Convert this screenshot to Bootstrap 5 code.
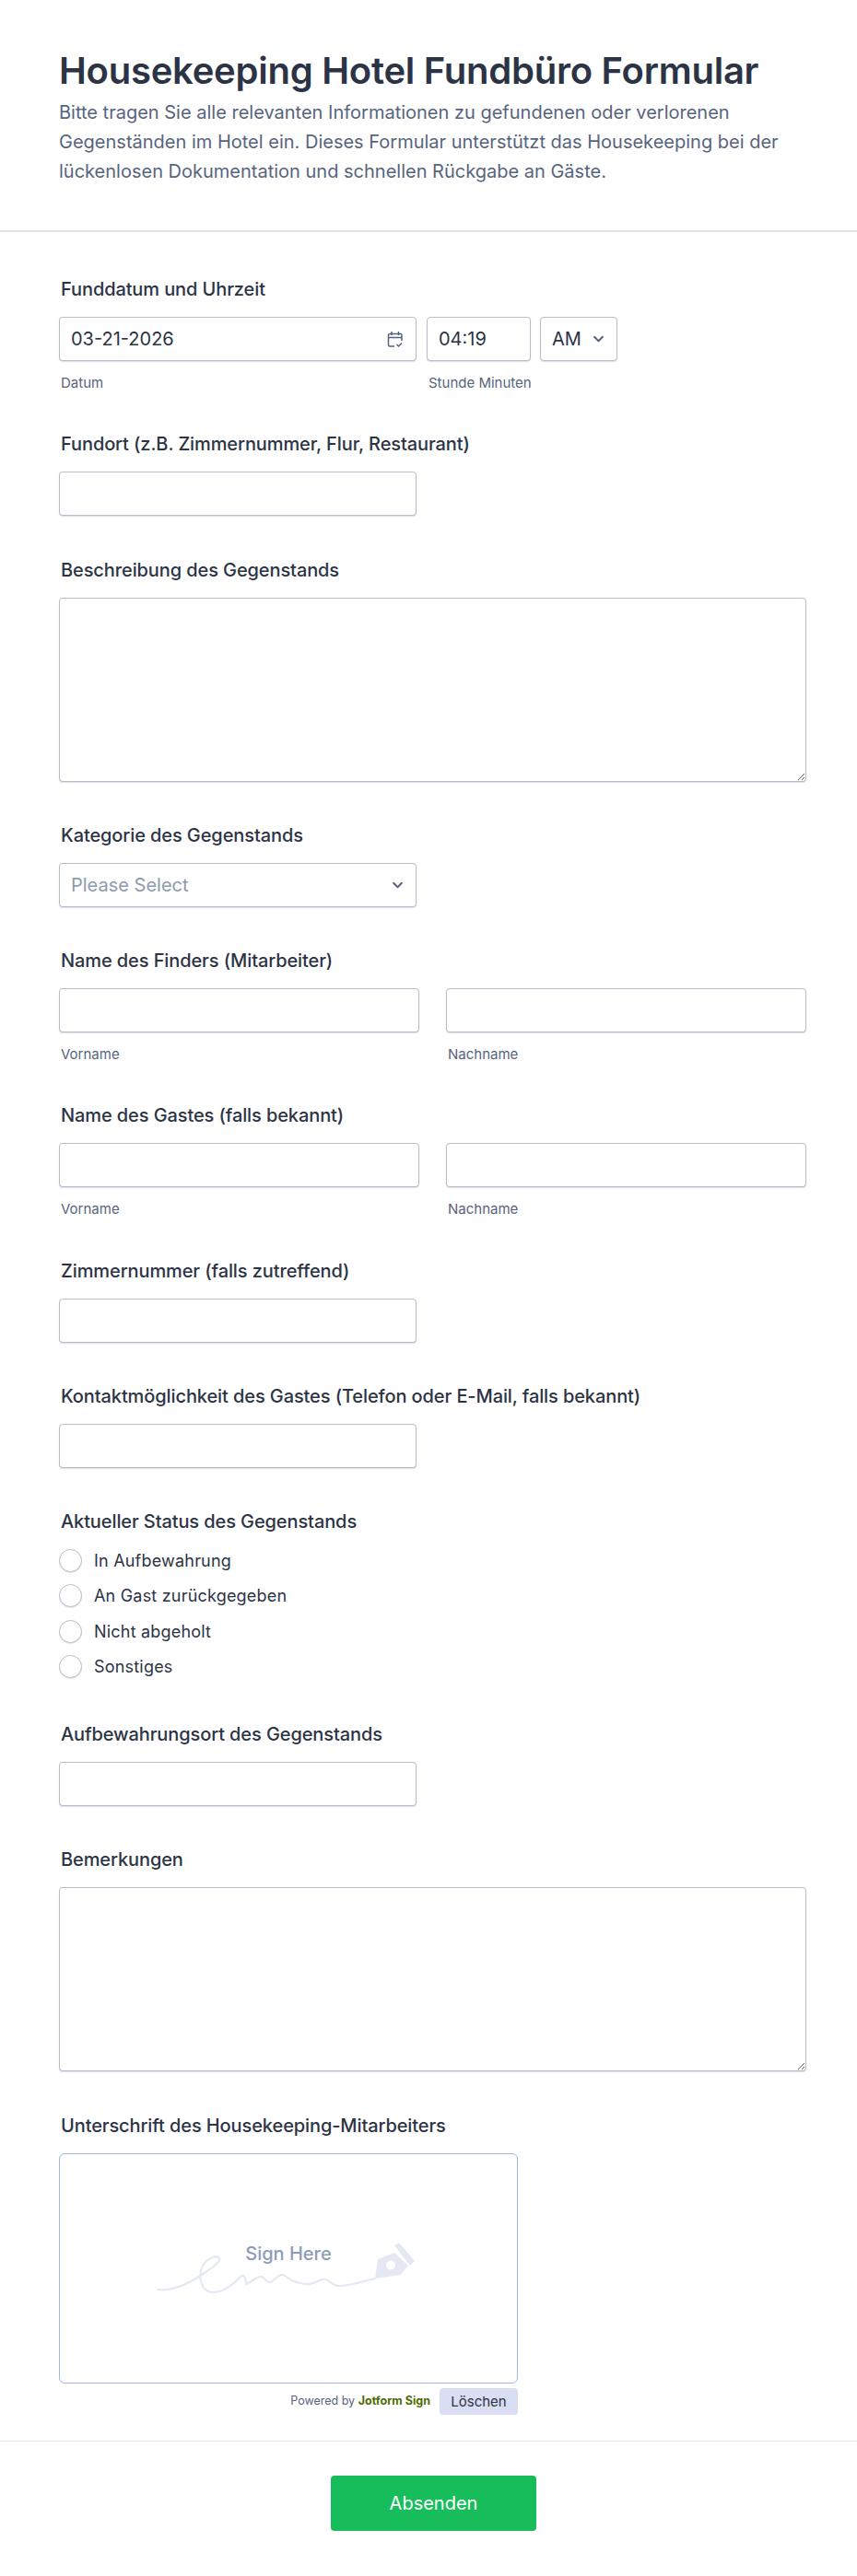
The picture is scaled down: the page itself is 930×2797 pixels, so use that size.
<!DOCTYPE html>
<html lang="de">
<head>
  <meta charset="UTF-8" />
  <meta name="viewport" content="width=device-width, initial-scale=1.0" />
  <title>Housekeeping Hotel Fundbüro Formular</title>
  <link href="https://cdn.jsdelivr.net/npm/bootstrap@5.3.0/dist/css/bootstrap.min.css" rel="stylesheet">
  <style>
    body {
      background: #fff;
      color: #2c3345;
      font-family: Inter, "Liberation Sans", sans-serif;
    }
    .form-head {
      padding: 51px 64px 0;
      height: 252px;
      border-bottom: 2px solid #dfe2ea;
    }
    .form-title {
      font-size: 40px;
      font-weight: 600;
      line-height: 52px;
      letter-spacing: -.25px;
      margin: 0 0 3px;
    }
    .form-desc {
      font-size: 20px;
      line-height: 32px;
      color: #57647e;
      margin: 0;
    }
    .form-body {
      padding: 50px 55px 0 64px;
    }
    .field-box {
      margin-bottom: 46.25px;
    }
    .field-label {
      display: block;
      font-size: 20px;
      font-weight: 500;
      line-height: 24px;
      letter-spacing: -.1px;
      margin: 0 0 18px 2px;
      color: #2c3345;
    }
    .form-control.field-input, .form-select.field-input {
      height: 48px;
      border: 1px solid #b8bdc9;
      border-radius: 4px;
      padding: 0 12px;
      font-size: 20px;
      color: #2c3345;
      box-shadow: 0 1px 1px rgba(184, 189, 201, .5);
    }
    .w-short { width: 388px; }
    .w-time { width: 113px; margin-left: 11px; }
    .w-ampm { width: 84px; margin-left: 10px; }
    .name-col { width: 391px; }
    .form-select.field-input {
      --bs-form-select-bg-img: url("data:image/svg+xml,%3csvg xmlns='http://www.w3.org/2000/svg' viewBox='0 0 14 9'%3e%3cpath fill='none' stroke='%2357647e' stroke-width='2.2' stroke-linecap='round' stroke-linejoin='round' d='M2 2l5 5 5-5'/%3e%3c/svg%3e");
      background-size: 13px 8px;
      background-position: right 13px center;
    }
    .select-empty { color: #8d9bb0 !important; }
    textarea.field-input.form-control {
      height: 200px;
    }
    .sub-label {
      font-size: 15px;
      line-height: 17px;
      color: #57647e;
      margin: 15px 0 0 2px;
      white-space: nowrap;
    }
    .date-wrap { position: relative; }
    .date-icon {
      position: absolute;
      right: 14px;
      top: 15px;
    }
    .radio-line {
      display: flex;
      align-items: center;
      height: 25px;
      margin-bottom: 13.3px;
      font-size: 18px;
      letter-spacing: .2px;
    }
    .radio-line .form-check-input {
      width: 25px;
      height: 25px;
      margin: 0 13px 0 0;
      border: 1px solid #b8bdc9;
      box-shadow: 0 1px 1px rgba(184, 189, 201, .4);
    }
    .radio-list { padding-bottom: 36px; }
    .sign-box {
      position: relative;
      width: 498px;
      height: 250px;
      border: 1px solid #9fb8dc;
      border-radius: 6px;
    }
    .sign-art {
      position: absolute;
      left: -1px;
      top: -1px;
    }
    .sign-text {
      position: absolute;
      top: 94px;
      left: 0;
      right: 0;
      text-align: center;
      font-size: 20px;
      font-weight: 500;
      line-height: 28px;
      color: #8d9bb8;
    }
    .sign-foot {
      width: 498px;
      margin-top: 5px;
      font-size: 12.5px;
      color: #57647e;
    }
    .jf-sign { color: #4c6d00; font-weight: 700; }
    .btn-clear {
      background: #dadef3;
      color: #2c3345;
      font-size: 15px;
      line-height: 29px;
      width: 85px;
      height: 29px;
      padding: 0;
      border: 0;
      border-radius: 4px;
      margin-left: 10px;
    }
    .form-foot {
      margin-top: 28px;
      border-top: 1px solid #e3e5ec;
      padding: 37px 0 49px 11px;
    }
    .btn-send {
      width: 223px;
      height: 60px;
      background: #18bd5b;
      border: 0;
      border-radius: 4px;
      color: #fff;
      font-size: 20px;
      font-weight: 400;
    }
  </style>
</head>
<body>

<div class="form-head">
  <h1 class="form-title">Housekeeping Hotel Fundbüro Formular</h1>
  <p class="form-desc">Bitte tragen Sie alle relevanten Informationen zu gefundenen oder verlorenen Gegenständen im Hotel ein. Dieses Formular unterstützt das Housekeeping bei der lückenlosen Dokumentation und schnellen Rückgabe an Gäste.</p>
</div>

<form class="form-body">

  <div class="field-box">
    <label class="field-label">Funddatum und Uhrzeit</label>
    <div class="d-flex">
      <div class="date-wrap w-short">
        <input type="text" class="form-control field-input" value="03-21-2026">
        <svg class="date-icon" width="18" height="19" viewBox="0 0 18 19" fill="none" stroke="#57647e" stroke-width="1.5">
          <path d="M16 11V5a1.5 1.5 0 0 0-1.500-1.500H3A1.500 1.500 0 0 0 1.500 5v10.500A1.500 1.500 0 0 0 3 17h5"/>
          <path d="M1.500 7.500h14.500M5 1v4M12.500 1v4"/>
          <path d="M10.500 15l2 2 3.500-3.500"/>
        </svg>
        <div class="sub-label">Datum</div>
      </div>
      <div class="w-time">
        <input type="text" class="form-control field-input" value="04:19">
        <div class="sub-label">Stunde Minuten</div>
      </div>
      <div class="w-ampm">
        <select class="form-select field-input"><option>AM</option><option>PM</option></select>
      </div>
    </div>
  </div>

  <div class="field-box">
    <label class="field-label">Fundort (z.B. Zimmernummer, Flur, Restaurant)</label>
    <input type="text" class="form-control field-input w-short">
  </div>

  <div class="field-box">
    <label class="field-label">Beschreibung des Gegenstands</label>
    <textarea class="form-control field-input"></textarea>
  </div>

  <div class="field-box">
    <label class="field-label">Kategorie des Gegenstands</label>
    <select class="form-select field-input w-short select-empty"><option>Please Select</option></select>
  </div>

  <div class="field-box">
    <label class="field-label">Name des Finders (Mitarbeiter)</label>
    <div class="d-flex justify-content-between">
      <div class="name-col">
        <input type="text" class="form-control field-input">
        <div class="sub-label">Vorname</div>
      </div>
      <div class="name-col">
        <input type="text" class="form-control field-input">
        <div class="sub-label">Nachname</div>
      </div>
    </div>
  </div>

  <div class="field-box">
    <label class="field-label">Name des Gastes (falls bekannt)</label>
    <div class="d-flex justify-content-between">
      <div class="name-col">
        <input type="text" class="form-control field-input">
        <div class="sub-label">Vorname</div>
      </div>
      <div class="name-col">
        <input type="text" class="form-control field-input">
        <div class="sub-label">Nachname</div>
      </div>
    </div>
  </div>

  <div class="field-box">
    <label class="field-label">Zimmernummer (falls zutreffend)</label>
    <input type="text" class="form-control field-input w-short">
  </div>

  <div class="field-box">
    <label class="field-label">Kontaktmöglichkeit des Gastes (Telefon oder E-Mail, falls bekannt)</label>
    <input type="text" class="form-control field-input w-short">
  </div>

  <div class="radio-list">
    <label class="field-label">Aktueller Status des Gegenstands</label>
    <div class="radio-line"><input class="form-check-input" type="radio" name="status"><span>In Aufbewahrung</span></div>
    <div class="radio-line"><input class="form-check-input" type="radio" name="status"><span>An Gast zurückgegeben</span></div>
    <div class="radio-line"><input class="form-check-input" type="radio" name="status"><span>Nicht abgeholt</span></div>
    <div class="radio-line"><input class="form-check-input" type="radio" name="status"><span>Sonstiges</span></div>
  </div>

  <div class="field-box">
    <label class="field-label">Aufbewahrungsort des Gegenstands</label>
    <input type="text" class="form-control field-input w-short">
  </div>

  <div class="field-box">
    <label class="field-label">Bemerkungen</label>
    <textarea class="form-control field-input"></textarea>
  </div>

  <div>
    <label class="field-label">Unterschrift des Housekeeping-Mitarbeiters</label>
    <div class="sign-box">
      <svg class="sign-art" width="498" height="250" viewBox="0 0 498 250" fill="none">
        <path d="M107 148C118 150 138 144 155 132C166 124 176 118 174 114C171 109 159 116 156 122C151 132 153 145 162 150C172 154 186 146 196 135C200 131 202 132 203 142C210 140 215 133 220 134C224 136 226 141 229 140C234 138 238 131 243 132C248 133 250 138 255 139C262 141 266 143 272 142C278 141 284 136 289 137C295 139 298 144 303 144C316 144 330 139 343 136" stroke="#e3e8f2" stroke-width="2.200" stroke-linecap="round"/>
        <path fill-rule="evenodd" d="M343 136L346 115L364 108L379 122L370.500 132ZM360 116.500a5 5 0 1 0 .1 0Z" fill="#e3e8f2"/>
        <path d="M364 100L369 97L386 117L381 122Z" fill="#e3e8f2"/>
      </svg>
      <div class="sign-text">Sign Here</div>
    </div>
    <div class="sign-foot d-flex justify-content-end align-items-center">
      <span>Powered by <span class="jf-sign">Jotform Sign</span></span>
      <button type="button" class="btn-clear">Löschen</button>
    </div>
  </div>

</form>

<div class="form-foot text-center">
  <button type="button" class="btn-send">Absenden</button>
</div>

<script src="https://cdn.jsdelivr.net/npm/bootstrap@5.3.0/dist/js/bootstrap.bundle.min.js"></script>
</body>
</html>
